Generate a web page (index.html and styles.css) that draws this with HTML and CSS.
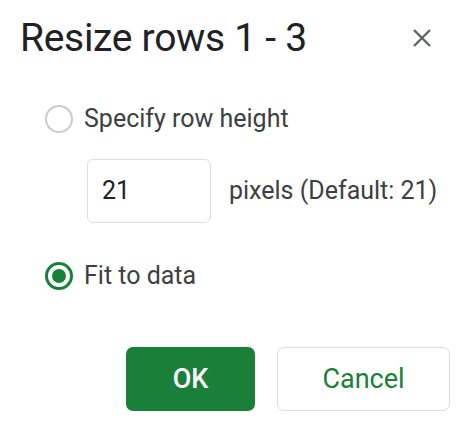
FILE: index.html
```html
<!DOCTYPE html>
<html>
<head>
<meta charset="utf-8">
<link rel="stylesheet" href="styles.css">
</head>
<body>
<div class="dialog">
  <div class="header">
    <div class="title">Resize rows 1 - 3</div>
    <svg class="close" width="20" height="20" viewBox="0 0 20 20"><path d="M2 2 L18 18 M18 2 L2 18" stroke="#5f6368" stroke-width="2.4" fill="none"/></svg>
  </div>
  <div class="option opt1">
    <span class="radio"></span>
    <span class="label">Specify row height</span>
  </div>
  <div class="inputrow">
    <div class="input">21</div>
    <span class="label">pixels (Default: 21)</span>
  </div>
  <div class="option opt2">
    <span class="radio checked"></span>
    <span class="label">Fit to data</span>
  </div>
  <div class="buttons">
    <div class="btn ok">OK</div>
    <div class="btn cancel">Cancel</div>
  </div>
</div>
</body>
</html>
```
FILE: styles.css
```css
html, body { margin: 0; padding: 0; background: #fff; }
body { font-family: Roboto, "Liberation Sans", sans-serif; }
.dialog { width: 474px; height: 425px; box-sizing: border-box; padding: 14px 24px 0 20px; }
.header { display: flex; align-items: center; justify-content: space-between; height: 48px; padding-right: 18px; }
.title { font-size: 39px; letter-spacing: -0.3px; line-height: 48px; color: #202124; }
.close { display: block; }
.option { display: flex; align-items: center; height: 32px; padding-left: 25px; }
.opt1 { margin-top: 41px; }
.opt2 { margin-top: 37px; }
.radio { width: 28px; height: 28px; box-sizing: border-box; border: 2px solid #c8cacd; border-radius: 50%; margin-right: 11px; position: relative; }
.radio.checked { border: 3px solid #188038; }
.radio.checked::after { content: ""; position: absolute; left: 4px; top: 4px; width: 14px; height: 14px; border-radius: 50%; background: #188038; }
.label { font-size: 25px; line-height: 32px; color: #3c4043; }
.inputrow { display: flex; align-items: center; margin-top: 24px; padding-left: 67px; }
.input { width: 124px; height: 64px; box-sizing: border-box; border: 1.5px solid #dadce0; border-radius: 6px; font-size: 25px; line-height: 61px; padding-left: 14px; color: #202124; margin-right: 18px; }
.buttons { display: flex; justify-content: flex-end; gap: 22px; margin-top: 55px; }
.btn { height: 64px; box-sizing: border-box; border-radius: 7px; font-size: 27px; display: flex; align-items: center; justify-content: center; }
.ok { width: 129px; background: #1a8039; color: #fff; font-weight: 500; }
.cancel { width: 173px; border: 1.5px solid #dadce0; color: #188038; font-weight: 400; }
```
